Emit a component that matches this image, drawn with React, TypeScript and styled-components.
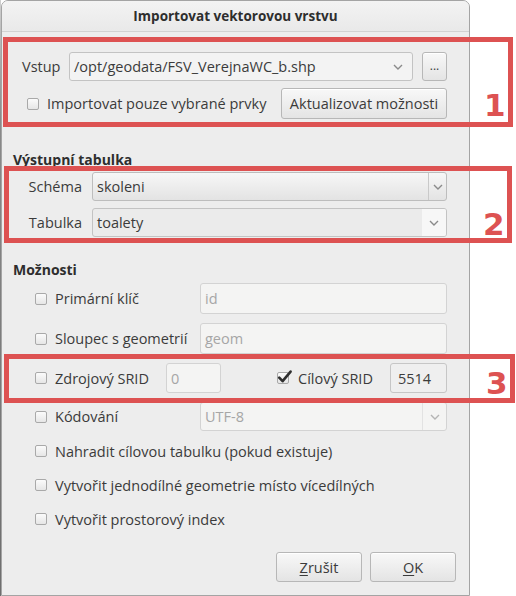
import React from "react";
import styled, { createGlobalStyle, css } from "styled-components";

const GlobalStyle = createGlobalStyle`
  html, body { margin: 0; padding: 0; background: #ffffff; }
  body {
    font-family: "Open Sans", "Noto Sans", "DejaVu Sans", sans-serif;
    font-size: 14.5px;
    color: #3b3b3b;
  }
  * { box-sizing: border-box; }
`;

const Stage = styled.div`
  position: relative;
  width: 516px;
  height: 596px;
  overflow: hidden;
  background: #ffffff;
  display: flex;
`;

const Sliver = styled.div`
  width: 1px;
  height: 100%;
  background: linear-gradient(#d0d0d0, #8a8a8a 20%, #6e6e6e);
`;

const Dialog = styled.div`
  width: 469px;
  height: 596px;
  background: #ededed;
  border: 1px solid #a4a4a4;
  border-radius: 7px 7px 0 0;
  display: flex;
  flex-direction: column;
`;

const TitleBar = styled.div`
  flex: none;
  height: 31px;
  display: flex;
  align-items: center;
  justify-content: center;
  font-weight: 700;
  font-size: 13.5px;
  color: #2e2e2e;
  background: linear-gradient(#f3f3f3, #e9e9e9);
  border-bottom: 1px solid #d2d2d2;
  border-radius: 6px 6px 0 0;
`;

const Body = styled.div`
  flex: 1;
  display: flex;
  flex-direction: column;
  padding: 20px 0 13px 0;
`;

const InputRow = styled.div`
  height: 29px;
  display: flex;
  align-items: center;
  padding: 0 22px 0 20px;
`;

const RowLabel = styled.span<{ $w: number }>`
  width: ${(p) => p.$w}px;
  flex: none;
  white-space: nowrap;
`;

const CheckRow = styled.div<{ $indent: number; $h: number; $mt?: number }>`
  height: ${(p) => p.$h}px;
  margin-top: ${(p) => p.$mt ?? 0}px;
  display: flex;
  align-items: center;
  padding: 0 22px 0 ${(p) => p.$indent}px;
  white-space: nowrap;
`;

const Box = styled.span`
  position: relative;
  flex: none;
  width: 12px;
  height: 12px;
  border: 1px solid #a9a9a9;
  border-radius: 2px;
  background: linear-gradient(#fbfbfb, #e6e6e6);
  margin-right: 8px;
  svg {
    position: absolute;
    left: 0px;
    top: -3px;
    overflow: visible;
  }
`;

const Check = ({ checked, mr }: { checked?: boolean; mr?: number }) => (
  <Box style={mr !== undefined ? { marginRight: mr } : undefined}>
    {checked && (
      <svg width="14" height="14" viewBox="0 0 14 14">
        <path
          d="M1.2 7.6 L4.6 11.2 L12.6 1.6"
          fill="none"
          stroke="#2f2f2f"
          strokeWidth="2.6"
          strokeLinecap="round"
          strokeLinejoin="round"
        />
      </svg>
    )}
  </Box>
);

const Button = styled.button<{ $w: number; $h: number }>`
  flex: none;
  width: ${(p) => p.$w}px;
  height: ${(p) => p.$h}px;
  margin-left: auto;
  padding: 0;
  font-family: inherit;
  font-size: 14.5px;
  color: #3b3b3b;
  border: 1px solid #b7b7b7;
  border-radius: 3px;
  background: linear-gradient(#f8f8f8, #e4e4e4);
  box-shadow: inset 0 1px 0 #ffffff;
  display: flex;
  align-items: center;
  justify-content: center;
  white-space: nowrap;
  u { text-decoration-thickness: 1px; text-underline-offset: 2px; }
`;

type ComboKind = "editable" | "button" | "table" | "disabled";

const ComboShell = styled.div<{ $w?: number; $h: number; $kind: ComboKind; $auto?: boolean }>`
  flex: none;
  width: ${(p) => (p.$w ? `${p.$w}px` : "auto")};
  height: ${(p) => p.$h}px;
  margin-left: ${(p) => (p.$auto ? "auto" : "0")};
  display: flex;
  border-radius: 3px;
  overflow: hidden;
  border: 1px solid #c3c3c3;
  ${(p) =>
    p.$kind === "button" &&
    css`
      background: linear-gradient(#f7f7f7, #e3e3e3);
      border-color: #bdbdbd;
    `}
  ${(p) =>
    p.$kind === "editable" &&
    css`
      background: #f3f3f3;
    `}
  ${(p) =>
    p.$kind === "table" &&
    css`
      background: #ebebeb;
    `}
  ${(p) =>
    p.$kind === "disabled" &&
    css`
      background: #f4f4f3;
      border-color: #d3d3d3;
      color: #a6a6a6;
    `}
`;

const ComboText = styled.span`
  flex: 1;
  display: flex;
  align-items: center;
  padding-left: 4px;
  white-space: nowrap;
  overflow: hidden;
`;

const ComboArrow = styled.span<{ $w: number; $sep?: string; $bg?: string }>`
  flex: none;
  width: ${(p) => p.$w}px;
  display: flex;
  align-items: center;
  justify-content: center;
  border-left: ${(p) => (p.$sep ? `1px solid ${p.$sep}` : "none")};
  background: ${(p) => p.$bg ?? "transparent"};
`;

const Chevron = ({ color = "#8a8a8a" }: { color?: string }) => (
  <svg width="10" height="6" viewBox="0 0 10 6">
    <polyline points="1,1 5,5 9,1" fill="none" stroke={color} strokeWidth="1.4" />
  </svg>
);

const SectionTitle = styled.div<{ $mt: number }>`
  margin-top: ${(p) => p.$mt}px;
  height: 20px;
  line-height: 20px;
  padding-left: 11px;
  font-weight: 700;
  font-size: 14px;
  color: #2e2e2e;
`;

const FormGrid = styled.div`
  margin-top: 2px;
  display: grid;
  grid-template-columns: 80px 355px;
  grid-auto-rows: 29px;
  column-gap: 10px;
  row-gap: 7px;
`;

const GridLabel = styled.span`
  display: flex;
  align-items: center;
  justify-content: flex-end;
`;

const OptionList = styled.div`
  margin-top: 3px;
  display: flex;
  flex-direction: column;
  gap: 9px;
`;

const Field = styled.div<{ $w: number; $h: number; $enabled?: boolean; $auto?: boolean }>`
  flex: none;
  width: ${(p) => p.$w}px;
  height: ${(p) => p.$h}px;
  margin-left: ${(p) => (p.$auto ? "auto" : "0")};
  display: flex;
  align-items: center;
  padding-left: ${(p) => (p.$enabled ? 7 : 4)}px;
  border-radius: 3px;
  background: ${(p) => (p.$enabled ? "#efefef" : "#f4f4f3")};
  border: 1px solid ${(p) => (p.$enabled ? "#c6c6c6" : "#d3d3d3")};
  color: ${(p) => (p.$enabled ? "#3b3b3b" : "#a6a6a6")};
`;

const Spacer = styled.span<{ $w: number }>`
  flex: none;
  width: ${(p) => p.$w}px;
`;

const Footer = styled.div`
  margin-top: auto;
  display: flex;
  justify-content: flex-end;
  gap: 8px;
  padding-right: 13px;
`;

const FooterButton = styled(Button)`
  margin-left: 0;
`;

const Dots = styled.span`
  font-size: 12px;
  margin-top: -3px;
`;

const AnnotBox = styled.div<{ $x: number; $y: number; $w: number; $h: number }>`
  position: absolute;
  left: ${(p) => p.$x}px;
  top: ${(p) => p.$y}px;
  width: ${(p) => p.$w}px;
  height: ${(p) => p.$h}px;
  border: 5px solid #dd5252;
  pointer-events: none;
`;

const AnnotNum = styled.div<{ $x: number; $y: number }>`
  position: absolute;
  left: ${(p) => p.$x}px;
  top: ${(p) => p.$y}px;
  font-family: "DejaVu Sans", sans-serif;
  font-weight: 700;
  font-size: 31px;
  line-height: 30px;
  color: #dd5252;
`;

export default function App() {
  return (
    <>
      <GlobalStyle />
      <Stage>
        <Sliver />
        <Dialog>
          <TitleBar>Importovat vektorovou vrstvu</TitleBar>
          <Body>
            <InputRow>
              <RowLabel $w={47}>Vstup</RowLabel>
              <ComboShell $w={344} $h={29} $kind="editable">
                <ComboText>/opt/geodata/FSV_VerejnaWC_b.shp</ComboText>
                <ComboArrow $w={28}>
                  <Chevron />
                </ComboArrow>
              </ComboShell>
              <Button $w={25} $h={29}>
                <Dots>...</Dots>
              </Button>
            </InputRow>
            <CheckRow $indent={25} $h={31} $mt={7}>
              <Check />
              <span>Importovat pouze vybrané prvky</span>
              <Button $w={166} $h={31}>
                Aktualizovat možnosti
              </Button>
            </CheckRow>

            <SectionTitle $mt={31}>Výstupní tabulka</SectionTitle>
            <FormGrid>
              <GridLabel>Schéma</GridLabel>
              <ComboShell $h={29} $kind="button">
                <ComboText>skoleni</ComboText>
                <ComboArrow $w={18} $sep="#c9c9c9">
                  <Chevron />
                </ComboArrow>
              </ComboShell>
              <GridLabel>Tabulka</GridLabel>
              <ComboShell $h={29} $kind="table">
                <ComboText>toalety</ComboText>
                <ComboArrow $w={24} $bg="#f7f7f7">
                  <Chevron />
                </ComboArrow>
              </ComboShell>
            </FormGrid>

            <SectionTitle $mt={23}>Možnosti</SectionTitle>
            <OptionList>
              <CheckRow $indent={33} $h={31}>
                <Check />
                <span>Primární klíč</span>
                <Field $w={247} $h={31} $auto>
                  id
                </Field>
              </CheckRow>
              <CheckRow $indent={33} $h={31}>
                <Check />
                <span>Sloupec s geometrií</span>
                <Field $w={247} $h={31} $auto>
                  geom
                </Field>
              </CheckRow>
              <CheckRow $indent={33} $h={30}>
                <Check />
                <RowLabel $w={111}>Zdrojový SRID</RowLabel>
                <Field $w={55} $h={30}>
                  0
                </Field>
                <Spacer $w={56} />
                <Check checked mr={9} />
                <span>Cílový SRID</span>
                <Field $w={57} $h={30} $enabled $auto>
                  5514
                </Field>
              </CheckRow>
              <CheckRow $indent={33} $h={29}>
                <Check />
                <span>Kódování</span>
                <ComboShell $w={247} $h={29} $kind="disabled" $auto>
                  <ComboText>UTF-8</ComboText>
                  <ComboArrow $w={24} $sep="#e2e2e2">
                    <Chevron color="#b4b4b4" />
                  </ComboArrow>
                </ComboShell>
              </CheckRow>
            </OptionList>
            <CheckRow $indent={33} $h={24} $mt={8}>
              <Check />
              <span>Nahradit cílovou tabulku (pokud existuje)</span>
            </CheckRow>
            <CheckRow $indent={33} $h={24} $mt={10}>
              <Check />
              <span>Vytvořit jednodílné geometrie místo vícedílných</span>
            </CheckRow>
            <CheckRow $indent={33} $h={24} $mt={10}>
              <Check />
              <span>Vytvořit prostorový index</span>
            </CheckRow>

            <Footer>
              <FooterButton $w={86} $h={30}>
                <span>
                  <u>Z</u>rušit
                </span>
              </FooterButton>
              <FooterButton $w={86} $h={30}>
                <span>
                  <u>O</u>K
                </span>
              </FooterButton>
            </Footer>
          </Body>
        </Dialog>

        <AnnotBox $x={3} $y={37} $w={510} $h={90} />
        <AnnotNum $x={484} $y={90}>1</AnnotNum>
        <AnnotBox $x={4} $y={166} $w={508} $h={77} />
        <AnnotNum $x={483} $y={209}>2</AnnotNum>
        <AnnotBox $x={4} $y={354} $w={511} $h={49} />
        <AnnotNum $x={486} $y={368}>3</AnnotNum>
      </Stage>
    </>
  );
}
